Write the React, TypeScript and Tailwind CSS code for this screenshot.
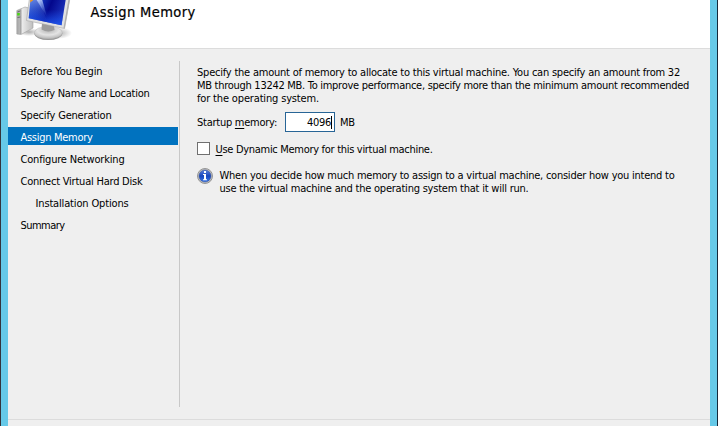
import { useLayoutEffect, useRef, useState, type ReactNode } from "react";

/* One line of text, tracked so that it fills the given width. */
function Line({ w, children, className = "" }: { w: number; children: ReactNode; className?: string }) {
  const ref = useRef<HTMLSpanElement>(null);
  const [tracking, setTracking] = useState(0);
  useLayoutEffect(() => {
    const el = ref.current;
    if (!el) return;
    el.style.letterSpacing = "0px";
    const n = (el.textContent ?? "").length;
    setTracking((w - el.getBoundingClientRect().width) / n);
  }, [w]);
  return (
    <div className={`whitespace-nowrap ${className}`}>
      <span ref={ref} style={{ letterSpacing: `${tracking}px` }}>
        {children}
      </span>
    </div>
  );
}

const steps = [
  { label: "Before You Begin", w: 82 },
  { label: "Specify Name and Location", w: 129 },
  { label: "Specify Generation", w: 91 },
  { label: "Assign Memory", w: 72, active: true },
  { label: "Configure Networking", w: 104 },
  { label: "Connect Virtual Hard Disk", w: 122 },
  { label: "Installation Options", w: 93, nested: true },
  { label: "Summary", w: 44 },
];

function ComputerIcon() {
  return (
    <svg width="60" height="44" viewBox="0 0 60 44" className="block">
      <defs>
        <linearGradient id="screen" x1="0" y1="0" x2="1" y2="0.3">
          <stop offset="0" stopColor="#2a5ad8" />
          <stop offset="0.35" stopColor="#1030b8" />
          <stop offset="0.6" stopColor="#03078c" />
          <stop offset="1" stopColor="#1a30b8" />
        </linearGradient>
        <linearGradient id="bottomGlow" x1="0" y1="0" x2="0" y2="1">
          <stop offset="0.4" stopColor="#1b50f0" stopOpacity="0" />
          <stop offset="1" stopColor="#1f5cf5" stopOpacity="0.8" />
        </linearGradient>
        <linearGradient id="streak" x1="0" y1="0" x2="0" y2="1">
          <stop offset="0" stopColor="#d4e2ff" stopOpacity="0.85" />
          <stop offset="1" stopColor="#5c86ee" stopOpacity="0" />
        </linearGradient>
        <linearGradient id="tower" x1="0" y1="0" x2="1" y2="0">
          <stop offset="0" stopColor="#a6a6a6" />
          <stop offset="0.26" stopColor="#bdbdbd" />
          <stop offset="0.32" stopColor="#ececec" />
          <stop offset="1" stopColor="#bdbdbd" />
        </linearGradient>
        <radialGradient id="stand" cx="0.5" cy="0.3" r="0.65">
          <stop offset="0" stopColor="#b2b2b2" />
          <stop offset="0.6" stopColor="#e4e4e4" />
          <stop offset="1" stopColor="#bcbcbc" />
        </radialGradient>
        <radialGradient id="shade">
          <stop offset="0" stopColor="#777" stopOpacity="0.6" />
          <stop offset="1" stopColor="#777" stopOpacity="0" />
        </radialGradient>
      </defs>
      <ellipse cx="42" cy="33" rx="14" ry="6" fill="url(#shade)" />
      <ellipse cx="13" cy="32" rx="11" ry="4" fill="url(#shade)" />
      <path d="M0.8 10.5L9 7L17 9V28L5 34.5L0.8 34Z" fill="url(#tower)" stroke="#a0a0a0" strokeWidth="0.6" />
      <path d="M4.8 9.5V34" stroke="#8b8b8b" strokeWidth="0.6" />
      <path d="M1.5 12L4.2 11M1.5 17.5L4.2 17" stroke="#555" strokeWidth="0.8" />
      <rect x="1.2" y="13" width="2.6" height="2.5" fill="#49d614" />
      <ellipse cx="32.3" cy="33.6" rx="14" ry="6.5" fill="#929292" />
      <ellipse cx="32.3" cy="32.6" rx="14" ry="6.2" fill="url(#stand)" stroke="#bababa" strokeWidth="0.5" />
      <path d="M26 23L38 26L38.5 30Q32 33 25.5 29.5Z" fill="#9c9c9c" />
      <path d="M13.5 -2L10.5 20.5L48.5 28.5L54 -2Z" fill="#e2e2e2" stroke="#a5a5a5" strokeWidth="0.6" />
      <path d="M52.5 -1L47.5 28L48.7 28.3L54 -1Z" fill="#b0b0b0" />
      <path d="M14.5 -1L12.7 18.3L45.5 25.2L49.8 -1Z" fill="url(#screen)" />
      <path d="M14.5 -1L12.7 18.3L45.5 25.2L49.8 -1Z" fill="url(#bottomGlow)" />
      <path d="M14.5 -1H23L31 21L12.7 18.3Z" fill="url(#streak)" opacity="0.45" />
      <path d="M20 -1H26L31 17Z" fill="url(#streak)" />
      <path d="M14.3 -1H18.5L14.2 2.5Z" fill="#f59a16" />
    </svg>
  );
}

function InfoIcon() {
  return (
    <svg width="16" height="16" viewBox="0 0 16 16" className="block shrink-0">
      <defs>
        <linearGradient id="info" x1="0" y1="0" x2="0" y2="1">
          <stop offset="0" stopColor="#5f83dc" />
          <stop offset="0.5" stopColor="#1746bd" />
          <stop offset="1" stopColor="#3d7bea" />
        </linearGradient>
      </defs>
      <circle cx="8" cy="8" r="7.5" fill="#c4c4c4" stroke="#8c8c8c" strokeWidth="0.9" />
      <circle cx="8" cy="8" r="6" fill="url(#info)" stroke="#304a91" strokeWidth="0.5" />
      <rect x="7" y="3" width="2" height="2" fill="#fff" />
      <path d="M6 6H9V11.2H10V12.2H6V11.2H7V7H6Z" fill="#fff" />
    </svg>
  );
}

export default function App() {
  return (
    <div className="flex h-[426px] w-[718px] overflow-hidden border-x border-l-[#34343c] border-r-[#15283a] bg-[#66c9e8] px-[7px] font-['DejaVu_Sans_Condensed','DejaVu_Sans',sans-serif] text-[11px] leading-[13px] text-black [font-stretch:condensed]">
      <div className="flex w-full flex-col bg-[#efefef]">
        <header className="flex h-[49px] shrink-0 border-b border-[#dcdcdc] bg-white pl-2">
          <ComputerIcon />
          <Line w={105} className="ml-[14.5px] pt-[3px] text-[14.5px] leading-[18px] [-webkit-text-stroke:0.2px_black]">
            Assign Memory
          </Line>
        </header>

        <main className="flex h-[371px] shrink-0 border-b border-[#dcdcdc] pt-3">
          <nav className="h-[346px] w-[172px] shrink-0 border-r border-[#c8c8c8] pr-px">
            {steps.map((s) => (
              <div
                key={s.label}
                className={`mb-1 flex h-[18px] items-center pt-[2px] ${s.nested ? "pl-[27.5px]" : "pl-[12.5px]"} ${
                  s.active ? "bg-[#0072bf] text-white" : ""
                }`}
              >
                <Line w={s.w}>{s.label}</Line>
              </div>
            ))}
          </nav>

          <section className="pt-[5px] pl-[17px]">
            <Line w={483}>Specify the amount of memory to allocate to this virtual machine. You can specify an amount from 32</Line>
            <Line w={492}>MB through 13242 MB. To improve performance, specify more than the minimum amount recommended</Line>
            <Line w={122}>for the operating system.</Line>

            <div className="mt-[7px] flex h-5 items-center">
              <Line w={80} className="w-[88px]">
                Startup <span className="underline underline-offset-2">m</span>emory:
              </Line>
              <div className="flex h-5 w-[50px] items-center justify-end border border-[#286596] bg-white pr-[2px]">
                <Line w={24}>4096</Line>
                <span className="h-[13px] w-px bg-black" />
              </div>
              <Line w={15} className="ml-[5px]">MB</Line>
            </div>

            <label className="mt-[10px] flex h-[13px] items-center">
              <span className="h-[13px] w-[13px] border border-[#707070] bg-white" />
              <Line w={217} className="ml-[5.5px] pt-[2px]">
                <span className="underline underline-offset-2">U</span>se Dynamic Memory for this virtual machine.
              </Line>
            </label>

            <div className="mt-[13px] flex">
              <InfoIcon />
              <div className="ml-[6.5px] pt-px">
                <Line w={455}>When you decide how much memory to assign to a virtual machine, consider how you intend to</Line>
                <Line w={309}>use the virtual machine and the operating system that it will run.</Line>
              </div>
            </div>
          </section>
        </main>
      </div>
    </div>
  );
}
